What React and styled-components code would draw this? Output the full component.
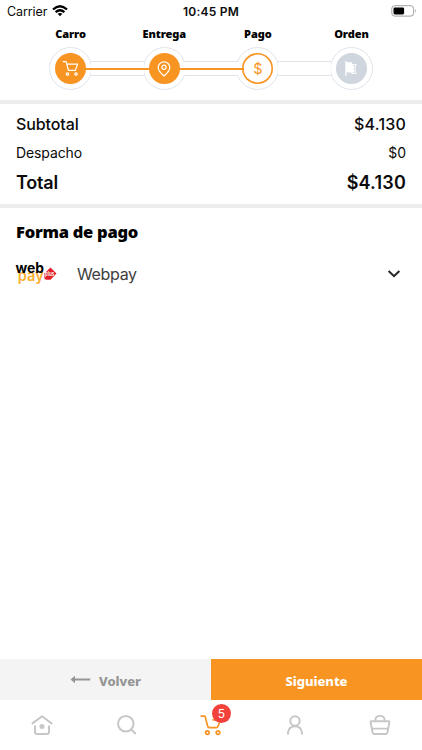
import React from "react";
import styled, { createGlobalStyle, css } from "styled-components";

const ORANGE = "#f89422";

const GlobalStyle = createGlobalStyle`
  * { box-sizing: border-box; }
  body { margin: 0; background: #fff; font-family: Inter, "Liberation Sans", sans-serif; color: #0b0b0b; }
  svg { display: block; }
`;

const heading = css`
  font-family: "Noto Sans", "Open Sans", sans-serif;
  font-weight: 800;
`;

const Screen = styled.div`
  width: 422px;
  height: 750px;
  display: flex;
  flex-direction: column;
  background: #fff;
  overflow: hidden;
`;

const StatusBar = styled.header`
  height: 22px;
  display: grid;
  grid-template-columns: 1fr auto 1fr;
  align-items: center;
  padding: 0 5px 0 7px;
  font-size: 12.5px;
`;
const Carrier = styled.div`
  display: flex;
  align-items: center;
  gap: 4.5px;
  height: 22px;
  letter-spacing: -0.1px;
  svg { margin-top: -1px; }
`;
const Clock = styled.div`
  font-weight: 600;
  font-size: 12px;
  letter-spacing: 0.25px;
  margin: 0 2px 0 0;
`;
const Battery = styled.div`
  justify-self: end;
`;

const Steps = styled.section`
  height: 78px;
  padding: 0 23.75px;
`;
const Labels = styled.div`
  height: 25px;
  display: grid;
  grid-template-columns: repeat(4, 1fr);
  text-align: center;
  line-height: 24px;
  font-size: 11px;
  ${heading}
  font-weight: 900;
  letter-spacing: -0.1px;
  color: #000;
`;
const Track = styled.div`
  display: flex;
  align-items: center;
  justify-content: center;
`;
const Ring = styled.div`
  flex: none;
  width: 43px;
  height: 43px;
  display: grid;
  place-items: center;
  border: 1px solid #dfe4ea;
  border-radius: 50%;
`;
const Disc = styled.div`
  width: 31px;
  height: 31px;
  display: grid;
  place-items: center;
  border-radius: 50%;
  color: ${(p) => (p.$state === "current" ? ORANGE : "#fff")};
  background: ${(p) => ({ done: ORANGE, current: "#fff", pending: "#cfd6de" })[p.$state]};
  box-shadow: ${(p) => (p.$state === "current" ? `inset 0 0 0 1.6px ${ORANGE}` : "none")};
  font-size: 14.5px;
`;
const Link = styled.div`
  position: relative;
  flex: none;
  width: 53.6px;
  height: 15px;
  margin: 0 -1.5px;
  background: #fff;
  border: solid #dfe4ea;
  border-width: 1px 0;
  &::after {
    content: "";
    display: ${(p) => (p.$done ? "block" : "none")};
    position: absolute;
    left: -6px;
    right: -6px;
    top: 6px;
    height: 2px;
    background: ${ORANGE};
  }
`;

const Divider = styled.div`
  flex: none;
  height: 4px;
  background: #ececec;
`;

const Summary = styled.section`
  height: 100px;
  padding: 5px 16px 0;
`;
const SummaryRow = styled.div`
  display: flex;
  justify-content: space-between;
  align-items: center;
  height: ${(p) => p.$height}px;
  font-size: ${(p) => p.$size}px;
  font-weight: ${(p) => p.$weight};
  letter-spacing: ${(p) => p.$spacing || 0}px;
`;
const Amount = styled.span`
  letter-spacing: ${(p) => p.$spacing || 0}px;
`;

const Payment = styled.section`
  flex: 1;
  padding: 10px 16px 0;
`;
const Title = styled.h1`
  margin: 0;
  font-size: 16.5px;
  line-height: 28px;
  ${heading}
  font-weight: 900;
  letter-spacing: -0.25px;
  color: #000;
`;
const Method = styled.div`
  display: flex;
  align-items: center;
  height: 56px;
`;
const MethodName = styled.span`
  flex: 1;
  margin-left: 20px;
  font-size: 16px;
  letter-spacing: -0.35px;
  color: #404040;
`;
const Chevron = styled.div`
  margin-right: 5px;
`;

const Actions = styled.div`
  display: flex;
  height: 41px;
`;
const Action = styled.button`
  flex: 1;
  display: flex;
  align-items: center;
  justify-content: center;
  gap: 8px;
  border: 0;
  padding: 2px 0 0;
  font-size: 13px;
  letter-spacing: -0.05px;
  color: ${(p) => (p.$primary ? "#fff" : "#959595")};
  background: ${(p) => (p.$primary ? ORANGE : "#f4f4f4")};
  ${heading}
`;

const TabBar = styled.nav`
  height: 50px;
  display: grid;
  grid-template-columns: repeat(5, 1fr);
  place-items: center;
  color: #c7c7c7;
`;
const Tab = styled.div`
  position: relative;
  color: ${(p) => (p.$active ? ORANGE : "inherit")};
`;
const Badge = styled.span`
  position: absolute;
  left: 12px;
  top: -10px;
  width: 19px;
  height: 19px;
  border-radius: 50%;
  background: #f2423b;
  color: #fff;
  font-size: 12px;
  line-height: 19px;
  text-align: center;
`;

const line = { fill: "none", stroke: "currentColor", strokeLinecap: "round", strokeLinejoin: "round" };

const CartIcon = () => (
  <svg width="22" height="22" viewBox="0 0 22 22" {...line} strokeWidth="1.7">
    <path d="M1.3 2.2H4.2Q5 2.2 5.3 3.1L7.7 12.3Q8 13.6 9.2 13.6H16.3Q17.5 13.6 17.9 12.5L20.6 5.8H13" />
    <circle cx="7.4" cy="18.6" r="1.8" />
    <circle cx="18" cy="18.6" r="1.8" />
  </svg>
);
const StepCart = () => (
  <svg width="17" height="17" viewBox="0 0 17 17" {...line} strokeWidth="1.2">
    <path d="M1.2 1.6H3.6Q4.2 1.6 4.4 2.3L6 9Q6.3 10.4 7.4 10.4H13.4L15.6 4.1H5" />
    <circle cx="5.5" cy="14.1" r="1.2" />
    <circle cx="14" cy="14.1" r="1.2" />
  </svg>
);
const PinIcon = () => (
  <svg width="14" height="16" viewBox="0 0 14 16" {...line} strokeWidth="1.2">
    <path d="M7 15Q1.2 9.8 1.2 6.4A5.8 5.5 0 0 1 12.8 6.4Q12.8 9.8 7 15Z" />
    <circle cx="7" cy="6.3" r="2.1" />
  </svg>
);
const FlagIcon = () => (
  <svg width="12" height="15" viewBox="0 0 12 15">
    <path d="M0.3 0H1.5V1.2H7.2V3H11.7L10.4 8L11.7 13H6.4V11.4H1.5V15H0.3Z" fill="currentColor" />
    <path d="M7.8 4.3H10.4L9 8L10.4 11.7H7.8" fill="none" stroke="#cfd6de" strokeWidth="0.8" />
  </svg>
);
const WifiIcon = () => (
  <svg width="16" height="12" viewBox="0 0 16 12" fill="none" stroke="#000" strokeWidth="2.3">
    <path d="M1 4.5Q8-2 15 4.5M3.6 7.2Q8 3.2 12.4 7.2" />
    <path d="M8 11.2L5.6 8.8Q8 7.1 10.4 8.8Z" fill="#000" stroke="none" />
  </svg>
);
const BatteryIcon = () => (
  <svg width="26" height="12" viewBox="0 0 26 12">
    <rect x="0.8" y="0.7" width="21.8" height="10.4" rx="2.8" fill="none" stroke="#a0a0a0" />
    <rect x="2.5" y="2.4" width="10.6" height="7" rx="1.3" />
    <path d="M24 4Q25.7 5.9 24 7.8Z" fill="#a0a0a0" />
  </svg>
);
const WebpayLogo = () => (
  <svg width="41" height="24" viewBox="0 0 41 24" overflow="visible" fontFamily="Inter, sans-serif">
    <text x="1.8" y="19.2" fontSize="15" fontWeight="600" textLength="26" lengthAdjust="spacingAndGlyphs" fill="#fbb034">pay</text>
    <text x="-0.5" y="10.8" fontSize="14" fontWeight="700" textLength="28.5" lengthAdjust="spacingAndGlyphs" fill="#000">web</text>
    <path d="M34.5 5.5L40.5 11.6 34.5 17.8H30.5Q28.3 17.8 28.3 15.6V11.6Z" fill="#e31f2b" />
    <text x="28.8" y="13.8" fontSize="6" fontWeight="600" textLength="9.5" lengthAdjust="spacingAndGlyphs" fill="#fff">plus</text>
  </svg>
);
const ChevronIcon = () => (
  <svg width="14" height="9" viewBox="0 0 14 9" fill="none" stroke="#262626" strokeWidth="2">
    <path d="M1.6 1L7 6.2L12.4 1" />
  </svg>
);
const BackArrow = () => (
  <svg width="21" height="9" viewBox="0 0 21 9" fill="#959595">
    <path d="M0.5 3.5L5 -0.3V2.5H20.2V4.5H5V7.3Z" />
  </svg>
);
const HomeIcon = () => (
  <svg width="22" height="22" viewBox="0 0 22 22" {...line} strokeWidth="2">
    <path d="M1.5 9.4L11 2.2L20.5 9.4M4 12.2V18Q4 20 6 20H16Q18 20 18 18V12.2" />
    <circle cx="11" cy="12.4" r="2.5" fill="currentColor" stroke="none" />
  </svg>
);
const SearchIcon = () => (
  <svg width="22" height="22" viewBox="0 0 22 22" {...line} strokeWidth="2">
    <circle cx="9.8" cy="9.8" r="7.8" />
    <path d="M15.5 15.8L19.3 19.4" />
  </svg>
);
const UserIcon = () => (
  <svg width="22" height="22" viewBox="0 0 22 22" {...line} strokeWidth="2">
    <circle cx="11" cy="7" r="4.7" />
    <path d="M4 19.8V18.6Q5 12.2 11 12.2Q17 12.2 18 18.6V19.8" />
  </svg>
);
const BasketIcon = () => (
  <svg width="22" height="22" viewBox="0 0 22 22" {...line} strokeWidth="1.9">
    <path d="M2.2 7.2H19.8Q20.5 7.2 20.4 8L18.5 18.4Q18.3 20 16.8 20H5.2Q3.7 20 3.5 18.4L1.6 8Q1.5 7.2 2.2 7.2ZM3 14.6H19M6.5 7V5.6Q6.5 1.9 11 1.9Q15.5 1.9 15.5 5.6V7" />
  </svg>
);

export default function App() {
  return (
    <>
      <GlobalStyle />
      <Screen>
        <StatusBar>
          <Carrier>Carrier <WifiIcon /></Carrier>
          <Clock>10:45 PM</Clock>
          <Battery><BatteryIcon /></Battery>
        </StatusBar>
        <Steps>
          <Labels>
            <span>Carro</span><span>Entrega</span><span>Pago</span><span>Orden</span>
          </Labels>
          <Track>
            <Ring><Disc $state="done"><StepCart /></Disc></Ring>
            <Link $done />
            <Ring><Disc $state="done"><PinIcon /></Disc></Ring>
            <Link $done />
            <Ring><Disc $state="current">$</Disc></Ring>
            <Link />
            <Ring><Disc $state="pending"><FlagIcon /></Disc></Ring>
          </Track>
        </Steps>
        <Divider />
        <Summary>
          <SummaryRow $height={29} $size={16} $weight={500} $spacing={-0.1}><span>Subtotal</span><Amount $spacing={0.2}>$4.130</Amount></SummaryRow>
          <SummaryRow $height={28} $size={14} $weight={400} $spacing={-0.1}><span>Despacho</span><Amount>$0</Amount></SummaryRow>
          <SummaryRow $height={33} $size={18} $weight={600} $spacing={-0.2}><span>Total</span><Amount $spacing={0.2}>$4.130</Amount></SummaryRow>
        </Summary>
        <Divider />
        <Payment>
          <Title>Forma de pago</Title>
          <Method>
            <WebpayLogo />
            <MethodName>Webpay</MethodName>
            <Chevron><ChevronIcon /></Chevron>
          </Method>
        </Payment>
        <Actions>
          <Action><BackArrow />Volver</Action>
          <Action $primary>Siguiente</Action>
        </Actions>
        <TabBar>
          <Tab><HomeIcon /></Tab>
          <Tab><SearchIcon /></Tab>
          <Tab $active><CartIcon /><Badge>5</Badge></Tab>
          <Tab><UserIcon /></Tab>
          <Tab><BasketIcon /></Tab>
        </TabBar>
      </Screen>
    </>
  );
}
